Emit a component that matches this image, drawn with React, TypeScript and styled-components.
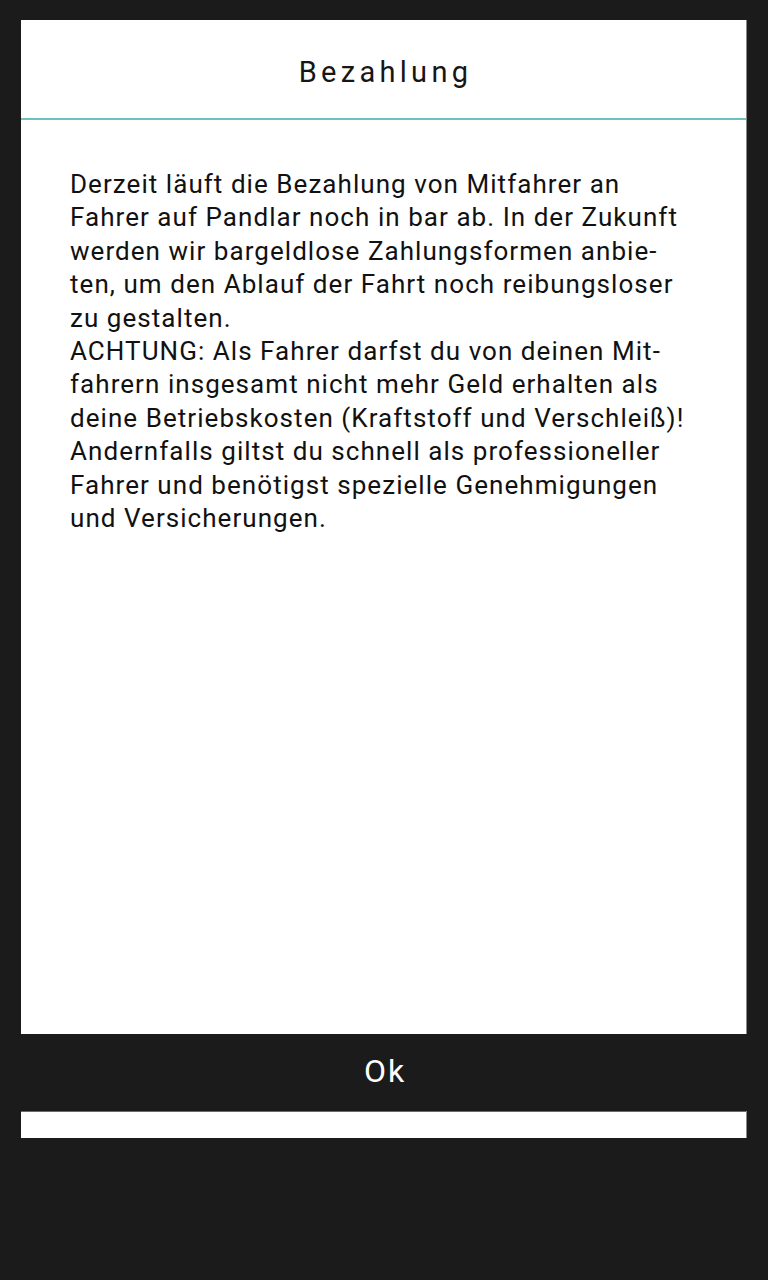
import React from "react";
import styled, { createGlobalStyle } from "styled-components";

const Global = createGlobalStyle`
  html, body { margin: 0; padding: 0; background: #1b1b1b; }
  body { font-family: Roboto, "Noto Sans", sans-serif; }
`;

const Page = styled.div`
  width: 768px;
  height: 1280px;
  box-sizing: border-box;
  padding: 20px 21px 0 21px;
  background: #1b1b1b;
`;

const Dialog = styled.div`
  width: 726px;
  height: 1118px;
  display: flex;
  flex-direction: column;
  background: #ffffff;
  border-right: 1px solid #8a8a8a;
  box-sizing: border-box;
`;

const Header = styled.div`
  height: 100px;
  box-sizing: border-box;
  border-bottom: 2px solid #6fc1c1;
  display: flex;
  align-items: center;
  justify-content: center;
  padding-top: 6px;
`;

const Title = styled.h1`
  margin: 0 0 0 4px;
  font-family: Roboto, sans-serif;
  font-weight: 400;
  font-size: 29px;
  letter-spacing: 4.3px;
  color: #161616;
`;

const Body = styled.div`
  flex: 1;
  padding: 48px 10px 0 49px;
`;

const Text = styled.p`
  margin: 0;
  font-family: Roboto, sans-serif;
  font-size: 26px;
  letter-spacing: 1.05px;
  line-height: 33.4px;
  color: #111111;
`;

const ButtonBar = styled.button`
  height: 77px;
  border: none;
  margin: 0 -1px 0 0;
  background: #1b1b1b;
  color: #ffffff;
  font-family: Roboto, sans-serif;
  font-size: 32px;
  letter-spacing: 2px;
  display: flex;
  align-items: center;
  justify-content: center;
  padding: 0 0 4px 2px;
  cursor: pointer;
`;

const Footer = styled.div`
  height: 27px;
  border-top: 1px solid #6a6a6a;
  box-sizing: border-box;
`;

const lines = [
  "Derzeit läuft die Bezahlung von Mitfahrer an",
  "Fahrer auf Pandlar noch in bar ab. In der Zukunft",
  "werden wir bargeldlose Zahlungsformen anbie-",
  "ten, um den Ablauf der Fahrt noch reibungsloser",
  "zu gestalten.",
  "ACHTUNG: Als Fahrer darfst du von deinen Mit-",
  "fahrern insgesamt nicht mehr Geld erhalten als",
  "deine Betriebskosten (Kraftstoff und Verschleiß)!",
  "Andernfalls giltst du schnell als professioneller",
  "Fahrer und benötigst spezielle Genehmigungen",
  "und Versicherungen.",
];

export default function App() {
  return (
    <>
      <Global />
      <Page>
        <Dialog>
          <Header>
            <Title>Bezahlung</Title>
          </Header>
          <Body>
            <Text>
              {lines.map((l, i) => (
                <React.Fragment key={i}>
                  {l}
                  {i < lines.length - 1 && <br />}
                </React.Fragment>
              ))}
            </Text>
          </Body>
          <ButtonBar>Ok</ButtonBar>
          <Footer />
        </Dialog>
      </Page>
    </>
  );
}
